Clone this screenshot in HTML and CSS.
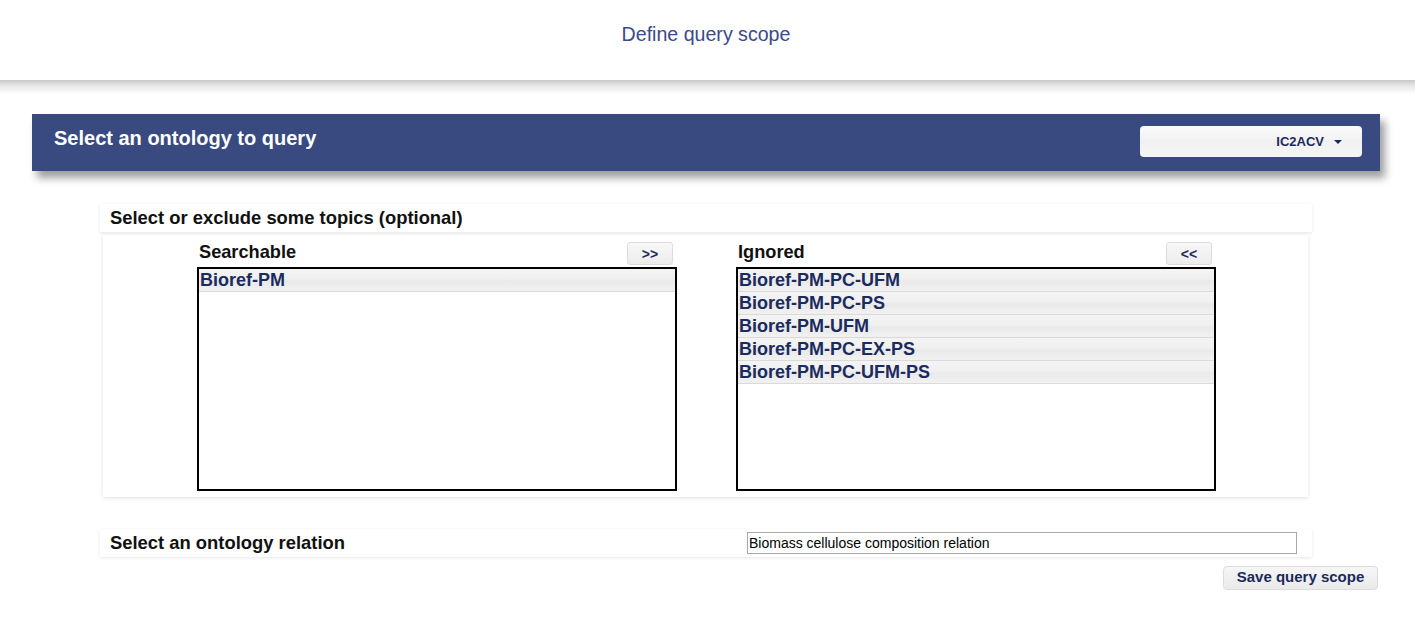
FILE: index.html
```html
<!DOCTYPE html>
<html>
<head>
<meta charset="utf-8">
<link rel="stylesheet" href="styles.css">
</head>
<body>
<header class="top">
  <div class="top-title">Define query scope</div>
</header>
<div class="top-shadow"></div>

<div class="onto-bar">
  <div class="onto-title">Select an ontology to query</div>
  <div class="dropdown">
    <span class="dd-label">IC2ACV</span>
    <span class="caret"></span>
  </div>
</div>

<main class="content">
  <div class="sect-head">Select or exclude some topics (optional)</div>
  <div class="panel">
    <div class="col">
      <div class="col-head">
        <span class="col-label">Searchable</span>
        <button class="mini-btn">&gt;&gt;</button>
      </div>
      <div class="list">
        <div class="item">Bioref-PM</div>
      </div>
    </div>
    <div class="col">
      <div class="col-head">
        <span class="col-label">Ignored</span>
        <button class="mini-btn">&lt;&lt;</button>
      </div>
      <div class="list">
        <div class="item">Bioref-PM-PC-UFM</div>
        <div class="item">Bioref-PM-PC-PS</div>
        <div class="item">Bioref-PM-UFM</div>
        <div class="item">Bioref-PM-PC-EX-PS</div>
        <div class="item">Bioref-PM-PC-UFM-PS</div>
      </div>
    </div>
  </div>

  <div class="sect-head rel">
    <span>Select an ontology relation</span>
    <input class="rel-input" type="text" value="Biomass cellulose composition relation">
  </div>
  <div class="save-row">
    <button class="save-btn">Save query scope</button>
  </div>
</main>
</body>
</html>
```
FILE: styles.css
```css
* { box-sizing: border-box; }
html, body { margin: 0; padding: 0; background: #fff; }
body { font-family: "Liberation Sans", Arial, sans-serif; width: 1415px; }

.top {
  height: 80px;
  display: flex;
  justify-content: center;
  padding-top: 22px;
}
.top-title {
  font-family: "Liberation Sans", Arial, sans-serif;
  font-size: 19.6px;
  line-height: 24px;
  color: #3b4a8a;
  margin-left: -3px;
}
.top-shadow {
  height: 14px;
  background: linear-gradient(#c8c8c8 0%, #e6e6e6 40%, #ffffff 100%);
}

.onto-bar {
  margin: 20px 35px 0 32px;
  height: 57px;
  background: #394a80;
  box-shadow: 5px 7px 8px rgba(0, 0, 0, 0.38);
  display: flex;
  justify-content: space-between;
  align-items: flex-start;
  padding: 12px 18px 0 22px;
}
.onto-title {
  color: #fff;
  font-weight: bold;
  font-size: 20px;
  line-height: 24px;
}
.dropdown {
  width: 222px;
  height: 31px;
  border-radius: 4px;
  background: linear-gradient(#fbfbfb 0%, #f1f1f1 50%, #f5f5f5 100%);
  display: flex;
  justify-content: flex-end;
  align-items: center;
  padding-right: 20px;
}
.dd-label {
  font-weight: bold;
  font-size: 13px;
  color: #1a2a5c;
}
.caret {
  width: 0;
  height: 0;
  margin-left: 10px;
  border-left: 4px solid transparent;
  border-right: 4px solid transparent;
  border-top: 4px solid #1a2a5c;
}

.content {
  margin: 33px 103px 0 100px;
}
.sect-head {
  height: 28px;
  background: #fff;
  box-shadow: 0 1px 3px rgba(0, 0, 0, 0.1);
  padding-left: 10px;
  font-weight: bold;
  font-size: 18.4px;
  color: #111;
  display: flex;
  align-items: center;
}
.panel {
  margin: 3px 4px 0 3px;
  height: 262px;
  background: #fff;
  box-shadow: 0 1px 4px rgba(0, 0, 0, 0.12);
  display: flex;
  justify-content: center;
  gap: 59px;
  padding: 7px 0 0 2px;
}
.col { width: 480px; }
.col-head {
  height: 25px;
  display: flex;
  justify-content: space-between;
  align-items: flex-start;
  padding: 0 4px 0 2px;
}
.col-label {
  font-weight: bold;
  font-size: 18.2px;
  color: #111;
  line-height: 20px;
}
.mini-btn {
  width: 46px;
  height: 23px;
  border: 1px solid #dcdcdc;
  border-radius: 3px;
  background: linear-gradient(#f8f8f8, #ececec);
  font-family: "Liberation Sans", Arial, sans-serif;
  font-weight: bold;
  font-size: 14px;
  color: #1a2a5c;
  padding: 0;
}
.list {
  height: 224px;
  border: 2px solid #000;
}
.item {
  height: 23px;
  line-height: 23px;
  padding-left: 1px;
  border-bottom: 1px solid #dadada;
  background: linear-gradient(#f4f4f4 0%, #f0f0f0 45%, #e9e9e9 55%, #f1f1f1 100%);
  font-weight: bold;
  font-size: 18px;
  color: #1c2b5e;
}

.rel {
  margin-top: 32px;
  justify-content: space-between;
  padding-right: 15px;
}
.rel-input {
  width: 550px;
  height: 22px;
  border: 1px solid #a8a8a8;
  font-family: "Liberation Sans", Arial, sans-serif;
  font-size: 14px;
  color: #000;
  padding: 0 1px;
}
.save-row {
  display: flex;
  justify-content: flex-end;
  margin: 9px -66px 0 0;
}
.save-btn {
  width: 155px;
  height: 24px;
  border: 1px solid #dcdcdc;
  border-radius: 4px;
  background: linear-gradient(#f6f6f6, #eaeaea);
  font-family: "Liberation Sans", Arial, sans-serif;
  font-weight: bold;
  font-size: 15px;
  line-height: 20px;
  color: #1a2a5c;
  padding: 0 0 2px 0;
}
```
